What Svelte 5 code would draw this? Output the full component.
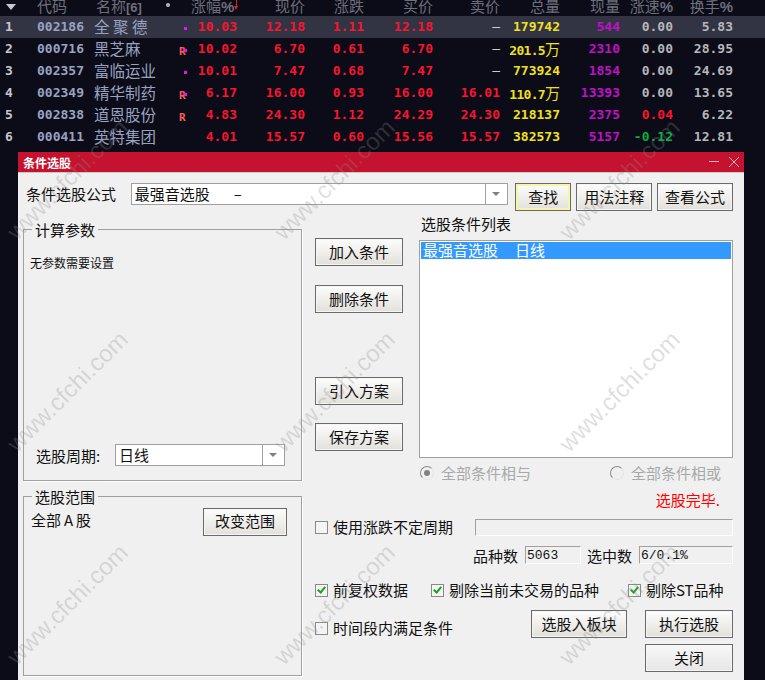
<script>
  const rows = [
    { id: 1, code: '002186', name: '全 聚 德', mark: 'dot', pct: '10.03', now: '12.18', diff: '1.11', buy: '12.18', sell: '–', vol: '179742', unit: '', cur: '544', speed: '0.00', turn: '5.83' },
    { id: 2, code: '000716', name: '黑芝麻', mark: 'both', pct: '10.02', now: '6.70', diff: '0.61', buy: '6.70', sell: '–', vol: '201.5', unit: '万', cur: '2310', speed: '0.00', turn: '28.95' },
    { id: 3, code: '002357', name: '富临运业', mark: 'dot', pct: '10.01', now: '7.47', diff: '0.68', buy: '7.47', sell: '–', vol: '773924', unit: '', cur: '1854', speed: '0.00', turn: '24.69' },
    { id: 4, code: '002349', name: '精华制药', mark: 'both', pct: '6.17', now: '16.00', diff: '0.93', buy: '16.00', sell: '16.01', vol: '110.7', unit: '万', cur: '13393', speed: '0.00', turn: '13.65' },
    { id: 5, code: '002838', name: '道恩股份', mark: 'r', pct: '4.83', now: '24.30', diff: '1.12', buy: '24.29', sell: '24.30', vol: '218137', unit: '', cur: '2375', speed: '0.04', turn: '6.22' },
    { id: 6, code: '000411', name: '英特集团', mark: '', pct: '4.01', now: '15.57', diff: '0.60', buy: '15.56', sell: '15.57', vol: '382573', unit: '', cur: '5157', speed: '-0.12', turn: '12.81' }
  ];

  const speedClass = (v) => (v.startsWith('-') ? 'green' : v === '0.00' ? 'grey' : 'red');

  // watermark grid
  const marks = [];
  for (const y of [165, 377, 590]) {
    for (const x of [68, 335, 620]) marks.push({ x, y });
  }
</script>

<div class="page">
  <section class="quote">
    <div class="row head">
      <span class="sort"></span>
      <span class="code">代码</span>
      <span class="name">名称<b>[6]</b></span>
      <span class="mark"></span>
      <span class="num">涨幅<b>%</b><i></i></span>
      <span class="num">现价</span>
      <span class="num">涨跌</span>
      <span class="num">买价</span>
      <span class="num">卖价</span>
      <span class="num">总量</span>
      <span class="num">现量</span>
      <span class="num">涨速<b>%</b></span>
      <span class="num">换手<b>%</b></span>
    </div>
    {#each rows as r}
      <div class="row" class:active={r.id === 1}>
        <span class="rank">{r.id}</span>
        <span class="code">{r.code}</span>
        <span class="name">{r.name}</span>
        <span class="mark">
          {#if r.mark === 'r' || r.mark === 'both'}<b>R</b>{/if}
          {#if r.mark === 'dot' || r.mark === 'both'}<em></em>{/if}
        </span>
        <span class="num red">{r.pct}</span>
        <span class="num red">{r.now}</span>
        <span class="num red">{r.diff}</span>
        <span class="num red">{r.buy}</span>
        <span class="num" class:red={r.sell !== '–'} class:white={r.sell === '–'}>{r.sell}</span>
        <span class="num yellow" class:tight={r.unit}>{r.vol}{#if r.unit}<small>{r.unit}</small>{/if}</span>
        <span class="num purple">{r.cur}</span>
        <span class="num {speedClass(r.speed)}">{r.speed}</span>
        <span class="num grey">{r.turn}</span>
      </div>
    {/each}
  </section>

  <section class="dialog">
    <header class="title">
      <span>条件选股</span>
      <svg width="30" height="10" viewBox="0 0 30 10">
        <path d="M0 4.5h10M20 0l10 10M30 0L20 10" stroke="#f0b4be" fill="none" />
      </svg>
    </header>

    <div class="form">
      <div class="top">
        <label class="formula">条件选股公式</label>
        <div class="combo wide">
          <span>最强音选股<span class="dash">–</span></span>
          <i class="drop"></i>
        </div>
        <button class="btn find">查找</button>
        <button class="btn w76">用法注释</button>
        <button class="btn w76">查看公式</button>
      </div>

      <div class="main">
        <div class="left">
          <fieldset class="params">
            <legend>计算参数</legend>
            <div class="params-in">
              <p class="hint">无参数需要设置</p>
              <div class="period">
                <span>选股周期:</span>
                <div class="combo short">
                  <span>日线</span>
                  <i class="drop"></i>
                </div>
              </div>
            </div>
          </fieldset>
          <fieldset class="scope">
            <legend>选股范围</legend>
            <div class="scope-in">
              <span>全部<span class="letter">A</span>股</span>
              <button class="btn w84">改变范围</button>
            </div>
          </fieldset>
        </div>

        <div class="right">
          <div class="upper">
            <div class="actions">
              <button class="btn w88">加入条件</button>
              <button class="btn w88">删除条件</button>
              <button class="btn w88 gap">引入方案</button>
              <button class="btn w88">保存方案</button>
            </div>
            <div class="conds">
              <div class="conds-title">选股条件列表</div>
              <div class="list"><div class="sel">最强音选股<span>日线</span></div></div>
            </div>
          </div>

          <div class="radios">
            <span class="radio on"><i></i>全部条件相与</span>
            <span class="radio"><i></i>全部条件相或</span>
          </div>
          <div class="status">选股完毕.</div>

          <div class="line first">
            <span class="check"><i></i>使用涨跌不定周期</span>
            <div class="bar"></div>
          </div>

          <div class="counts">
            <span>品种数</span><div class="field f56">5063</div>
            <span>选中数</span><div class="field f94">6/0.1%</div>
          </div>

          <div class="opts">
            <span class="check on"><i></i>前复权数据</span>
            <span class="check on"><i></i>剔除当前未交易的品种</span>
            <span class="check on"><i></i>剔除ST品种</span>
          </div>

          <div class="bottom">
            <span class="check time"><i></i>时间段内满足条件</span>
            <button class="btn w96">选股入板块</button>
            <div class="run">
              <button class="btn w88">执行选股</button>
              <button class="btn w88 plain">关闭</button>
            </div>
          </div>
        </div>
      </div>
    </div>
  </section>

  <div class="wm" aria-hidden="true">
    {#each marks as m}
      <span style="left:{m.x}px;top:{m.y}px">www.cfchi.com</span>
    {/each}
  </div>
</div>

<style>
  :global(body) {
    margin: 0;
    background: #0b0c17;
  }

  .page {
    position: relative;
    width: 765px;
    height: 680px;
    overflow: hidden;
    background: #0b0c17;
    font-family: "Noto Sans CJK SC", "Liberation Sans", sans-serif;
    font-size: 15px;
    color: #111;
  }

  .quote {
    height: 152px;
    font-family: "DejaVu Sans Mono", "Noto Sans CJK SC", monospace;
    font-weight: 700;
    font-size: 13px;
  }

  .row {
    display: grid;
    grid-template-columns: 29px 65px 85px 12px 46px 68px 59px 69px 67px 60px 60px 53px 60px;
    height: 22px;
    line-height: 22px;
    white-space: nowrap;
  }

  .row.active {
    background: #323443;
  }

  .row.head {
    height: 16px;
    line-height: 12px;
    overflow: hidden;
    color: #6e6f7c;
    font-family: "Noto Sans CJK SC", sans-serif;
    font-weight: 400;
    font-size: 15px;
  }

  .head .code {
    padding-left: 8px;
    color: #6e6f7c;
  }

  .head .name {
    padding-left: 2px;
    margin-top: 0;
    color: #6e6f7c;
    font-size: 15px;
  }

  .head b {
    font-family: "Liberation Sans", sans-serif;
    font-size: 13px;
  }

  .head .num b {
    font-size: 15px;
  }

  .head .mark::after {
    content: "";
    position: absolute;
    left: -13px;
    top: 3px;
    width: 4px;
    height: 4px;
    border-radius: 50%;
    background: #b8b8c0;
  }

  .head .num:nth-child(5) {
    position: relative;
    padding-right: 5px;
  }

  /* sort arrow */
  .head i {
    position: absolute;
    right: 0;
    top: 0;
    width: 1px;
    height: 6px;
    background: #e0202c;
  }

  .head i::after {
    content: "";
    position: absolute;
    left: -2px;
    top: 6px;
    border: 2.5px solid transparent;
    border-top: 4px solid #e0202c;
    border-bottom: 0;
  }

  .sort {
    position: relative;
  }

  .sort::after {
    content: "";
    position: absolute;
    left: 6px;
    top: 4px;
    border: 5px solid transparent;
    border-top: 6px solid #c8c8d0;
    border-bottom: 0;
  }

  .rank {
    padding-left: 5px;
    color: #c4c6d0;
  }

  .code {
    padding-left: 8px;
    color: #9aa2c2;
  }

  .name {
    margin-top: -1px;
    font-family: "Noto Sans CJK SC", sans-serif;
    font-weight: 400;
    font-size: 15.5px;
    color: #9aa2c2;
  }

  .mark {
    position: relative;
  }

  .mark b {
    position: absolute;
    left: 0;
    top: 3px;
    color: #ff5a5a;
    font-size: 11px;
  }

  .mark em {
    position: absolute;
    left: 5px;
    top: 11px;
    width: 3px;
    height: 3px;
    background: #f010f0;
  }

  .num {
    text-align: right;
  }

  .red { color: #fa1430; }
  .yellow { color: #f0e020; }
  .purple { color: #c010c8; }
  .grey { color: #b6b6bc; }
  .white { color: #d8d8d8; font-weight: 400; }
  .green { color: #00b040; }

  .tight {
    letter-spacing: -0.7px;
  }

  small {
    font-family: "Noto Sans CJK SC", sans-serif;
    font-weight: 400;
    font-size: 15px;
    letter-spacing: 0;
  }

  .dialog {
    width: 726px;
    height: 528px;
    margin-left: 18px;
    background: #f0f0f0;
  }

  .title {
    display: flex;
    align-items: center;
    justify-content: space-between;
    height: 21px;
    padding: 0 5px;
    background: #c5122e;
    border-bottom: 1px solid #c8c8c8;
    box-sizing: border-box;
    color: #fff;
    font-size: 12px;
    font-weight: 700;
  }

  .form {
    padding: 10px 11px 0 5px;
  }

  .top {
    display: flex;
    align-items: flex-start;
    gap: 5px;
    height: 28px;
  }

  .formula {
    width: 105px;
    margin-left: 3px;
    margin-right: -5px;
    line-height: 22px;
  }

  .combo {
    position: relative;
    box-sizing: border-box;
    height: 22px;
    line-height: 20px;
    padding-left: 3px;
    background: #fff;
    border: 1px solid #a0a0a0;
  }

  .combo.wide {
    width: 378px;
    margin-right: 2px;
  }

  .combo.short {
    width: 170px;
  }

  .dash {
    margin-left: 24px;
  }

  .drop {
    position: absolute;
    right: 0;
    top: 0;
    width: 21px;
    height: 20px;
    border-left: 1px solid #a0a0a0;
  }

  .drop::after {
    content: "";
    position: absolute;
    left: 6px;
    top: 8px;
    border: 4px solid transparent;
    border-top: 4px solid #808080;
    border-bottom: 0;
  }

  .btn {
    box-sizing: border-box;
    height: 28px;
    padding: 0 0 2px;
    border: 1px solid #6a6a6a;
    background: linear-gradient(#fdfdfd, #e2e0da);
    box-shadow: inset 0 0 0 1px #f5f5f5;
    font: inherit;
    color: #111;
  }

  .find {
    width: 56px;
    box-shadow: inset 0 0 0 2px #f6f6a8;
  }

  .w76 { width: 76px; }
  .w84 { width: 84px; }
  .w88 { width: 88px; }
  .w96 { width: 96px; }

  .plain {
    background: linear-gradient(#f8f8f8, #e6e6e6);
  }

  .main {
    display: grid;
    grid-template-columns: 279px 1fr;
    column-gap: 13px;
    margin-top: 10px;
  }

  fieldset {
    margin: 0;
    padding: 0;
    border: 1px solid #a0a0a0;
    box-shadow: 1px 1px 0 #fff;
  }

  legend {
    margin-left: 8px;
    padding: 0 3px;
    line-height: 17px;
  }

  .params-in {
    display: flex;
    flex-direction: column;
    justify-content: space-between;
    box-sizing: border-box;
    height: 242px;
    padding: 16px 0 14px 6px;
  }

  .hint {
    margin: 0;
    font-size: 12px;
    line-height: 18px;
  }

  .period {
    display: flex;
    align-items: center;
    padding-left: 6px;
  }

  .period > span {
    width: 79px;
  }

  .scope {
    margin-top: 7px;
  }

  .scope-in {
    display: flex;
    justify-content: space-between;
    box-sizing: border-box;
    height: 170px;
    padding: 3px 14px 0 7px;
    line-height: 24px;
  }

  .letter {
    display: inline-block;
    width: 15px;
    text-align: center;
  }

  .upper {
    display: flex;
    gap: 16px;
  }

  .actions {
    display: flex;
    flex-direction: column;
    gap: 19px;
    padding-top: 17px;
  }

  .actions .btn.gap {
    margin-top: 45px;
  }

  .actions .btn:last-child {
    margin-top: -1px;
  }

  .conds {
    width: 314px;
  }

  .conds-title {
    margin: -6px 0 7px 2px;
    line-height: 18px;
  }

  .list {
    box-sizing: border-box;
    height: 218px;
    padding: 1px;
    background: #fff;
    border: 1px solid #a0a0a0;
  }

  .sel {
    height: 17px;
    line-height: 16px;
    padding-left: 2px;
    background: #3399ff;
    color: #fff;
  }

  .sel span {
    margin-left: 17px;
  }

  .radios {
    display: flex;
    gap: 79px;
    height: 18px;
    margin-top: 6px;
    padding-left: 105px;
    line-height: 18px;
    color: #a8a8a8;
  }

  .radio {
    display: flex;
    align-items: center;
    gap: 7px;
  }

  .radio i {
    position: relative;
    box-sizing: border-box;
    width: 14px;
    height: 14px;
    border: 1.5px solid #8c8c8c;
    border-right-color: #e4e4e4;
    border-bottom-color: #e4e4e4;
    border-radius: 50%;
    background: #f0f0f0;
  }

  .radio.on i::after {
    content: "";
    position: absolute;
    left: 2.5px;
    top: 2.5px;
    width: 6px;
    height: 6px;
    border-radius: 50%;
    background: #808080;
  }

  .status {
    margin-top: 9px;
    padding-right: 13px;
    text-align: right;
    line-height: 18px;
    color: #f00;
  }

  .line {
    display: flex;
    align-items: center;
    justify-content: space-between;
    margin-top: 9px;
  }

  .bar {
    box-sizing: border-box;
    width: 258px;
    height: 17px;
    border: 1px solid #a0a0a0;
    border-right-color: #fff;
    border-bottom-color: #fff;
  }

  .check {
    display: inline-flex;
    align-items: center;
    gap: 5px;
    white-space: nowrap;
    line-height: 18px;
  }

  .check i {
    position: relative;
    box-sizing: border-box;
    width: 13px;
    height: 13px;
    border: 1px solid #8a8a8a;
    background: #f4f4f4;
  }

  .check.on i::after {
    content: "";
    position: absolute;
    left: 3px;
    top: 0;
    width: 3px;
    height: 6px;
    border: solid #1ea01e;
    border-width: 0 2px 2px 0;
    transform: rotate(40deg);
  }

  .counts {
    display: flex;
    justify-content: flex-end;
    align-items: center;
    margin-top: 10px;
    height: 18px;
  }

  .field {
    box-sizing: border-box;
    height: 18px;
    margin-left: 7px;
    padding-left: 1px;
    border: 1px solid #a0a0a0;
    border-right-color: #fff;
    border-bottom-color: #fff;
    font-family: "Liberation Mono", monospace;
    font-size: 13px;
    line-height: 17px;
  }

  .f56 { width: 56px; margin-right: 6px; }
  .f94 { width: 94px; }

  .opts {
    display: flex;
    margin-top: 17px;
    height: 18px;
  }

  .opts .check:nth-child(1) { width: 116px; }
  .opts .check:nth-child(2) { width: 197px; }

  .bottom {
    display: flex;
    align-items: flex-start;
    margin-top: 11px;
  }

  .time {
    width: 216px;
    margin-top: 9px;
  }

  .run {
    display: flex;
    flex-direction: column;
    gap: 6px;
    margin-left: 18px;
  }

  .wm {
    position: absolute;
    inset: 0;
    pointer-events: none;
  }

  .wm span {
    position: absolute;
    width: 160px;
    font-family: "Liberation Sans", sans-serif;
    font-size: 24px;
    line-height: 28px;
    color: rgba(140, 140, 140, 0.28);
    white-space: nowrap;
    transform: translate(-50%, 0) rotate(-45deg);
  }
</style>
